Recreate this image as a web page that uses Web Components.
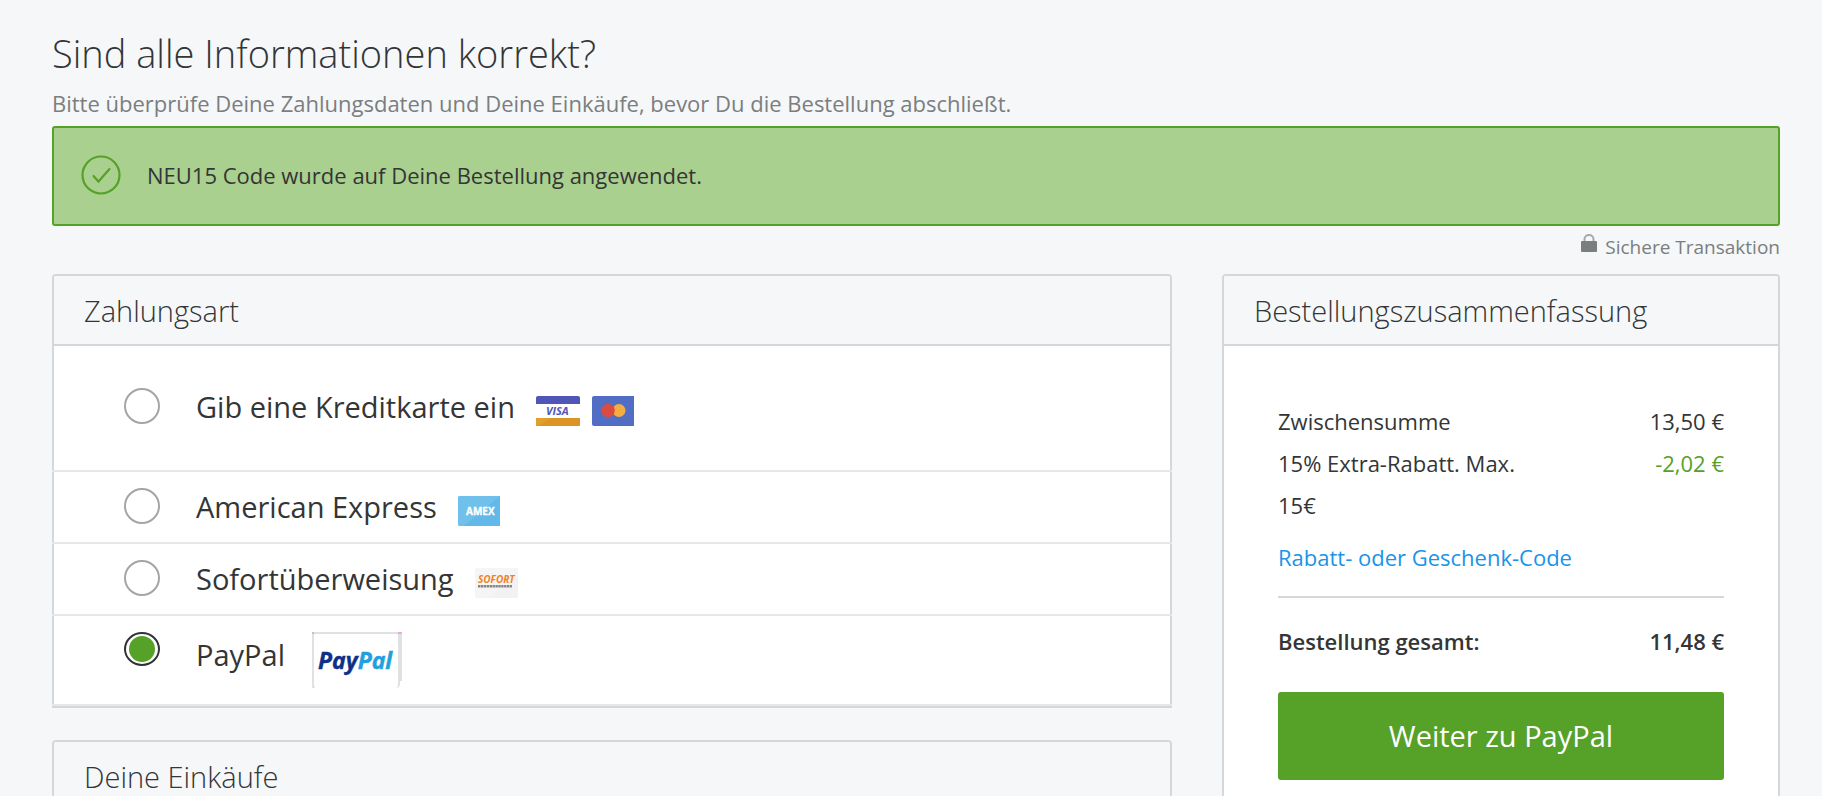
<!DOCTYPE html>
<html lang="de">
<head>
<meta charset="utf-8">
<meta name="viewport" content="width=device-width, initial-scale=1">
<title>Sind alle Informationen korrekt?</title>
<style>
  body {
    margin: 0;
    background: #f5f7f9;
    color: #333536;
    font-family: "Open Sans", "Liberation Sans", sans-serif;
    font-size: 22px;
  }
</style>
</head>
<body>
<checkout-page>
  <page-heading slot="heading">
    Sind alle Informationen korrekt?
    <span slot="lead">Bitte überprüfe Deine Zahlungsdaten und Deine Einkäufe, bevor Du die Bestellung abschließt.</span>
  </page-heading>
  <success-banner slot="notice">NEU15 Code wurde auf Deine Bestellung angewendet.</success-banner>
  <secure-note slot="notice">Sichere Transaktion</secure-note>
  <content-card slot="main">
    <span slot="title">Zahlungsart</span>
    <payment-methods></payment-methods>
  </content-card>
  <content-card slot="main">
    <span slot="title">Deine Einkäufe</span>
  </content-card>
  <content-card slot="side">
    <span slot="title">Bestellungszusammenfassung</span>
    <order-summary></order-summary>
  </content-card>
</checkout-page>

<script>
class BaseElement extends HTMLElement {
  constructor() {
    super();
    this.attachShadow({ mode: "open" }).innerHTML = this.constructor.markup;
  }
}

customElements.define("checkout-page", class extends BaseElement {
  static markup = `
    <style>
      :host { display: block; padding: 24px 42px 32px 52px; }
      .columns { display: grid; grid-template-columns: minmax(0, 1120fr) minmax(0, 558fr); gap: 50px; align-items: start; }
      main, aside { display: flex; flex-direction: column; gap: 32px; }
    </style>
    <header><slot name="heading"></slot></header>
    <slot name="notice"></slot>
    <div class="columns">
      <main><slot name="main"></slot></main>
      <aside><slot name="side"></slot></aside>
    </div>`;
});

customElements.define("page-heading", class extends BaseElement {
  static markup = `
    <style>
      :host { display: block; }
      h1 { margin: 0; font-size: 38px; font-weight: 300; line-height: 58px; }
      p { margin: 0; padding-bottom: 2px; line-height: 42px; color: #7b7e7e; }
    </style>
    <h1><slot></slot></h1>
    <p><slot name="lead"></slot></p>`;
});

customElements.define("success-banner", class extends BaseElement {
  static markup = `
    <style>
      :host { display: flex; align-items: center; gap: 26px; box-sizing: border-box; min-height: 100px; padding: 0 27px 2px; border: 2px solid #56a128; border-radius: 3px; background: #aad08f; }
      svg { flex: none; width: 40px; height: 40px; }
      p { margin: 0; line-height: 42px; }
    </style>
    <svg viewBox="0 0 40 40" fill="none" stroke="#56a128" stroke-width="2.2" aria-hidden="true">
      <circle cx="20" cy="20" r="18.5"/>
      <path d="M12.5 21 L17.5 26.5 L28.5 14" stroke-linecap="round"/>
    </svg>
    <p role="status"><slot></slot></p>`;
});

customElements.define("secure-note", class extends BaseElement {
  static markup = `
    <style>
      :host { display: flex; justify-content: flex-end; align-items: center; gap: 7px; margin-bottom: 6px; font-size: 19px; line-height: 42px; color: #7b7e7e; }
      svg { width: 18px; height: 18px; margin-bottom: 8px; }
    </style>
    <svg viewBox="0 0 18 18" aria-hidden="true">
      <path d="M4.5 8V5a4.5 4 0 0 1 9 0v3" fill="none" stroke="#a5a8a8" stroke-width="2"/>
      <rect x="1" y="7" width="16" height="11" rx="1" fill="#7b7e7e"/>
    </svg>
    <span><slot></slot></span>`;
});

customElements.define("content-card", class extends BaseElement {
  static markup = `
    <style>
      :host { display: block; border: 2px solid #d4d8db; border-radius: 4px 4px 0 0; background: #fff; }
      h2 { margin: 0; padding: 2px 30px 0; border-bottom: 2px solid #d4d8db; border-radius: 2px 2px 0 0; background: #f5f7f9; font-size: 29px; font-weight: 300; line-height: 66px; }
    </style>
    <h2><slot name="title"></slot></h2>
    <slot></slot>`;
});

customElements.define("payment-methods", class extends BaseElement {
  static markup = `
    <style>
      :host { display: block; margin: 0 -2px; }
      fieldset { margin: 0; padding: 0; border: 0; }
      label { display: flex; align-items: flex-start; padding: 16px 72px; border-bottom: 2px solid #e5e7e8; font-size: 29px; line-height: 38px; }
      label.featured { padding-top: 42px; padding-bottom: 44px; }
      label.tall { line-height: 46px; }
      input { appearance: none; flex: none; display: grid; place-items: center; box-sizing: border-box; width: 36px; height: 36px; margin: 0 36px 0 0; border: 2px solid #a2a6a9; border-radius: 50%; background: #fff; }
      input:checked { height: 34px; border-color: #303233; }
      input:checked::before { content: ""; width: 26px; height: 26px; border-radius: 50%; background: #56a128; }
      .logos { display: flex; gap: 12px; margin: 8px 0 0 21px; }
      .tall .logos { margin: 0 0 0 27px; }
    </style>
    <fieldset aria-label="Zahlungsart">
      <label class="featured"><input type="radio" name="method" value="card"><span>Gib eine Kreditkarte ein</span>
        <span class="logos"><visa-logo></visa-logo><mastercard-logo></mastercard-logo></span></label>
      <label><input type="radio" name="method" value="amex"><span>American Express</span>
        <span class="logos"><amex-logo></amex-logo></span></label>
      <label><input type="radio" name="method" value="sofort"><span>Sofortüberweisung</span>
        <span class="logos"><sofort-logo></sofort-logo></span></label>
      <label class="tall"><input type="radio" name="method" value="paypal" checked><span>PayPal</span>
        <span class="logos"><paypal-logo></paypal-logo></span></label>
    </fieldset>`;
});

const logoStyle = `<style>:host { display: block; } svg { display: block; } text { font-family: "Open Sans", sans-serif; font-weight: 700; }</style>`;

customElements.define("visa-logo", class extends BaseElement {
  static markup = `${logoStyle}
    <svg width="44" height="30" viewBox="0 0 44 30" aria-hidden="true">
      <path d="M0 8V2a2 2 0 0 1 2-2h40a2 2 0 0 1 2 2v6z" fill="#5055b8"/>
      <text x="10" y="19" font-size="11" font-style="italic" fill="#5055b8">VISA</text>
      <path d="M0 22h44v7a1 1 0 0 1-1 1H1a1 1 0 0 1-1-1z" fill="#dc9524"/>
      <path d="M0 22h14L3 30H1a1 1 0 0 1-1-1z" fill="#dfa02e"/>
    </svg>`;
});

customElements.define("mastercard-logo", class extends BaseElement {
  static markup = `${logoStyle}
    <svg width="42" height="30" viewBox="0 0 42 30" aria-hidden="true">
      <path d="M2 0h40v30H2a2 2 0 0 1-2-2V2a2 2 0 0 1 2-2z" fill="#526dc4"/>
      <circle cx="27" cy="14.5" r="6.5" fill="#f6ad40"/>
      <circle cx="16" cy="14.5" r="6.8" fill="#da4c41"/>
    </svg>`;
});

customElements.define("amex-logo", class extends BaseElement {
  static markup = `${logoStyle}
    <svg width="42" height="30" viewBox="0 0 42 30" aria-hidden="true">
      <path d="M2 0h40v30H2a2 2 0 0 1-2-2V2a2 2 0 0 1 2-2z" fill="#62b8e8"/>
      <path d="M2 0h40L6 30H2a2 2 0 0 1-2-2V2a2 2 0 0 1 2-2z" fill="#6fc0ea"/>
      <text x="8" y="19" font-size="10" fill="#fff" stroke="#fff" stroke-width="0.3">AMEX</text>
    </svg>`;
});

customElements.define("sofort-logo", class extends BaseElement {
  static markup = `${logoStyle}
    <svg width="43" height="30" viewBox="0 0 43 30" aria-hidden="true">
      <rect width="43" height="30" rx="1" fill="#f5f5f5"/>
      <path d="M43 8V30H12z" fill="#f2f2f2"/>
      <text x="3" y="15" font-size="10" font-style="italic" fill="#f08228">SOFORT</text>
      <path d="M3 18.2h34" stroke="#858585" stroke-width="2.4" stroke-dasharray="2.4 0.5"/>
    </svg>`;
});

customElements.define("paypal-logo", class extends BaseElement {
  static markup = `${logoStyle}
    <svg width="90" height="56" viewBox="0 0 90 56" aria-hidden="true">
      <path d="M0 0h90v49h-2V53l-2 3h-1l1-3V4a2 2 0 0 0-2-2H4a2 2 0 0 0-2 2v49l1 3H0z" fill="#dfe2e2"/>
      <path d="M0 0h2v2H0zM86 0h4v2h-4z" fill="#f0a6e6"/>
      <text x="6" y="37" font-size="23" font-style="italic" fill="#0d3088" stroke="#0d3088" stroke-width="0.4">Pay<tspan fill="#22a0de" stroke="#22a0de">Pal</tspan></text>
    </svg>`;
});

customElements.define("order-summary", class extends BaseElement {
  static markup = `
    <style>
      :host { display: block; padding: 54px; line-height: 42px; }
      table { width: 100%; border-collapse: collapse; }
      th { width: 60%; padding: 0; font-weight: 400; text-align: left; vertical-align: top; }
      td { padding: 0; text-align: right; vertical-align: top; white-space: nowrap; }
      .discount td { color: #56a128; }
      .total { margin-top: 18px; border-top: 2px solid #d4d8db; padding-top: 22px; }
      .total th, .total td { font-weight: 600; }
      a { display: block; margin-top: 10px; color: #1894e8; text-decoration: none; }
      button { display: block; width: 100%; margin: 30px 0 0; padding: 22px; border: 0; border-radius: 3px; background: #56a128; color: #fff; font: inherit; font-size: 29px; line-height: 44px; }
    </style>
    <table>
      <tr><th scope="row">Zwischensumme</th><td>13,50 €</td></tr>
      <tr class="discount"><th scope="row">15% Extra-Rabatt. Max. 15€</th><td>-2,02 €</td></tr>
    </table>
    <a href="#code">Rabatt- oder Geschenk-Code</a>
    <div class="total">
      <table><tr><th scope="row">Bestellung gesamt:</th><td>11,48 €</td></tr></table>
    </div>
    <button type="button">Weiter zu PayPal</button>`;
});
</script>
</body>
</html>
